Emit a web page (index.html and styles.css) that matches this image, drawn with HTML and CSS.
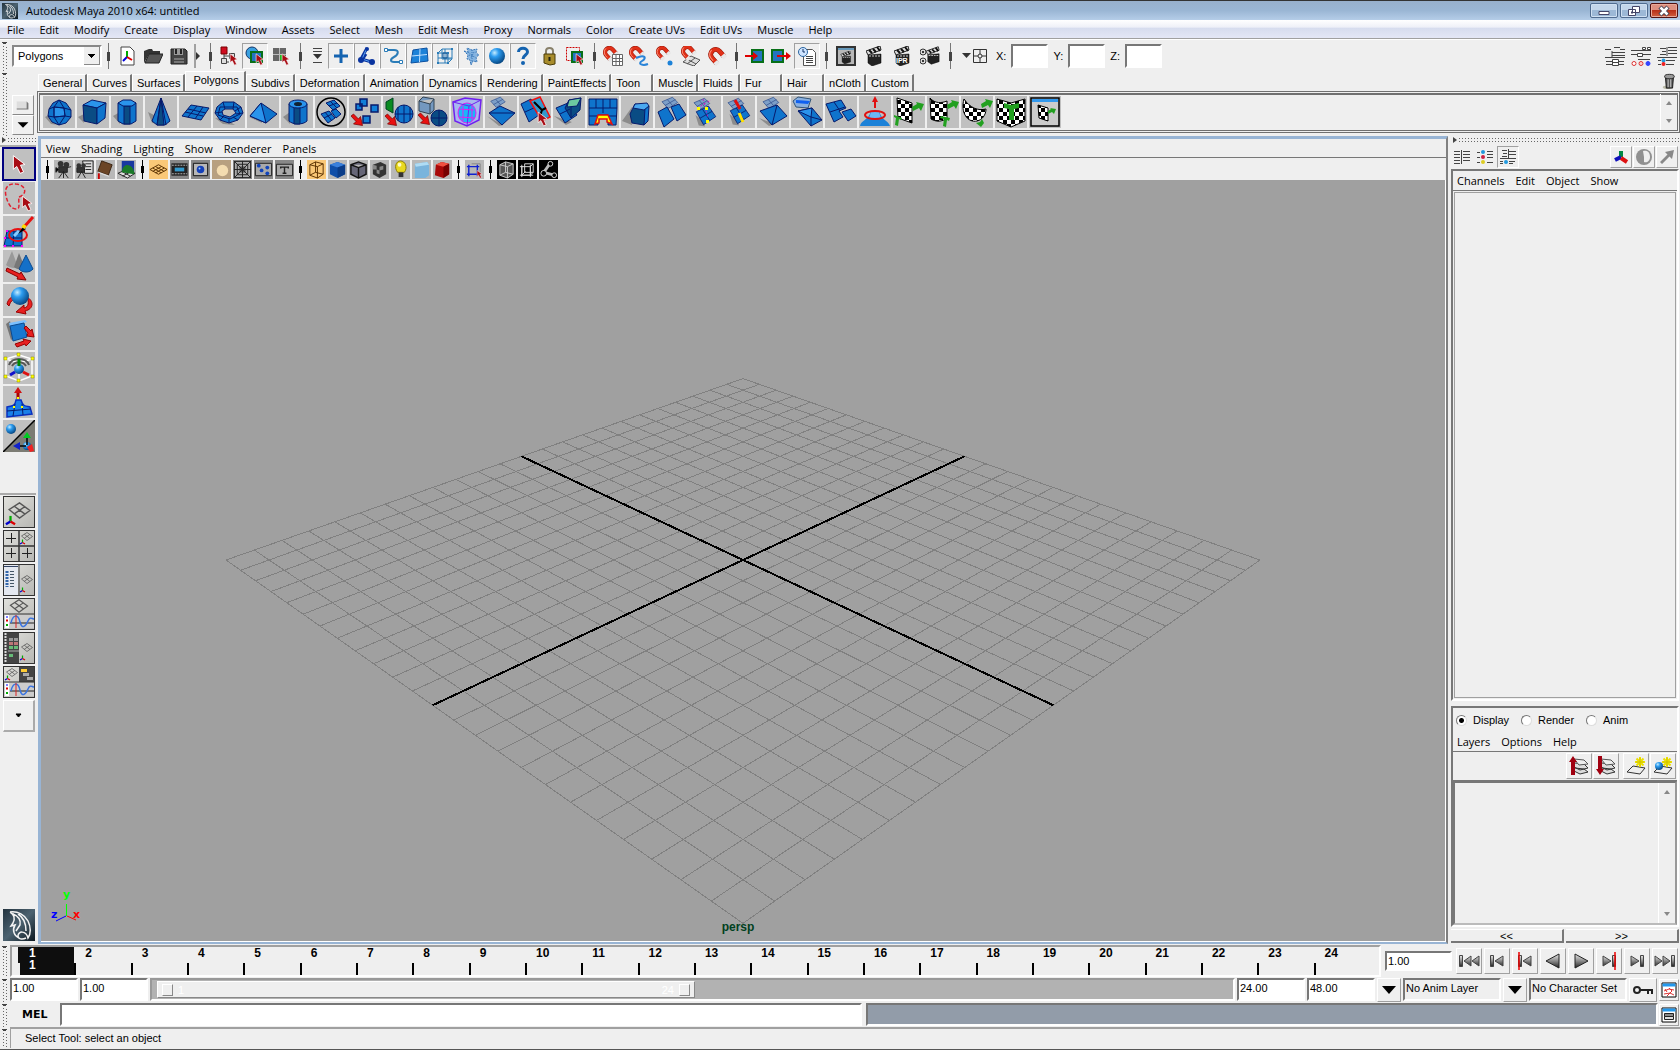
FILE: index.html
```html
<!doctype html>
<html lang="en">
<head>
    <meta charset="utf-8">
    <meta name="viewport" content="width=device-width, initial-scale=1.0">
    <title>Autodesk Maya 2010 x64: untitled</title>
    <link rel="stylesheet" href="styles.css">
</head>
<body>

<!-- Shared icon parts -->
<svg class="sprite" aria-hidden="true">
    <defs>
        <radialGradient id="ball" cx="35%" cy="30%" r="75%">
            <stop offset="0" stop-color="#c4ecff"/><stop offset=".35" stop-color="#2c9cf0"/><stop offset="1" stop-color="#04427c"/>
        </radialGradient>
        <linearGradient id="metal" x1="0" y1="0" x2="0" y2="1">
            <stop offset="0" stop-color="#e8e8e8"/><stop offset=".5" stop-color="#8a8a8a"/><stop offset="1" stop-color="#222"/>
        </linearGradient>
        <linearGradient id="dusk" x1="0" y1="0" x2="1" y2="1">
            <stop offset="0" stop-color="#24343f"/><stop offset=".5" stop-color="#4c6270"/><stop offset="1" stop-color="#0c1820"/>
        </linearGradient>
        <pattern id="chk" width="8" height="8" patternUnits="userSpaceOnUse">
            <rect width="8" height="8" fill="#fff"/><path d="M0 0h4v4h-4zM4 4h4v4h-4z"/>
        </pattern>
    </defs>
    <symbol id="cursor" viewBox="0 0 11 15"><path d="M1 1v10l2.500-2 2.500 5 2.500-1-2.300-5 3.300-.5z" fill="#a80c14" stroke="#fff" stroke-width=".7"/></symbol>
    <symbol id="redarrow" viewBox="0 0 14 14"><path d="M1 3l2.500-2 5 5 2-2.500 2 9-9-1.500 2.500-2.500z" fill="#e81010" stroke="#700" stroke-width=".7"/></symbol>
    <symbol id="magnet" viewBox="0 0 20 20">
        <g transform="rotate(-42 10 10)" fill="none">
            <path d="M5 15V8a5 5 0 0 1 10 0v7" stroke="#8c1408" stroke-width="5"/>
            <path d="M5 15V8a5 5 0 0 1 10 0v7" stroke="#e03018" stroke-width="4"/>
            <path d="M4 11V8a6 6 0 0 1 6-6" stroke="#ff9880"/>
            <path d="M5 13v4M15 13v4" stroke="#e8e8e8" stroke-width="5"/>
        </g>
    </symbol>
    <symbol id="clap" viewBox="0 0 16 20">
        <path d="M2 9l13-1v9l-9 3-4-3z" fill="#222" stroke="#000" stroke-width=".5"/><path d="M0 5l14-5 1 4-13 5z" fill="#ddd" stroke="#222"/><path d="M3 4l3 3M7 3l3 3M11 1l3 4" stroke="#111" stroke-width="2"/><path d="M3 10h12" stroke="#ccc" stroke-dasharray="2 1"/>
    </symbol>
    <symbol id="sheet" viewBox="0 0 32 32"><path class="sh" d="M3 16l4 13 8 1-4-8z"/><path class="b" d="M4 12l15-7 9 13-15 10z"/><path class="ln" d="M11.500 8.500l9 14M8.500 20l15-8.500"/></symbol>
    <symbol id="ghost" viewBox="0 0 32 32"><path d="M4 9l14-6 7 7-13 8z" fill="#7d9fc8" stroke="#33508c"/><path d="M11 6l7 8M8 14l14-8" stroke="#33508c" fill="none"/></symbol>
    <symbol id="mini-axis" viewBox="0 0 12 12"><path d="M6 7V1" stroke="#0a0" stroke-width="2.500"/><path d="M6 7l-5 3" stroke="#00c" stroke-width="2.500"/><path d="M6 7l5 3" stroke="#d00" stroke-width="2.500"/></symbol>
    <symbol id="mini-grid" viewBox="0 0 24 18"><path d="M1 8L12 1l11 8-11 8zM6.500 4.500l11 8M17.500 5L6.500 12.500" fill="none" stroke="#555" stroke-width="1.500"/></symbol>
    <symbol id="graph" viewBox="0 0 32 15"><path d="M1 1h30v13H1z" fill="#ccc"/><path d="M2 1h4v13H2z" fill="#fff"/><path d="M3 3h2" stroke="#00f"/><path d="M3 6.500h2" stroke="#d00" stroke-width="2"/><path d="M3 11h2" stroke="#0a0" stroke-width="2"/><path d="M7 9h24" stroke="#222"/><path d="M8 9c2-9 7-9 9-1s6 4 8-1 4-2 6-2" fill="none" stroke="#3a74e0" stroke-width="1.500"/><path d="M13 1v13" stroke="#d22"/></symbol>
    <symbol id="bars" viewBox="0 0 16 16"><path d="M0 2.500h6M0 5.500h6M0 8.500h6M0 11.500h6M0 14.500h6M9 2.500h7M9 5.500h7M9 8.500h7M9 11.500h7" stroke="#444"/><path d="M7.500 1v14" stroke="#444"/></symbol>
    <symbol id="stack" viewBox="0 0 20 20"><path d="M6 12l9 1 4 3-8 2-6-3M6 7l9 1 4 4-8 2-6-3" fill="#ddd" stroke="#333"/><path d="M5 3l10 1 4 4-9 1z" fill="#eee" stroke="#555"/></symbol>
    <symbol id="page" viewBox="0 0 20 20"><path d="M1 16l6-6 12 2-5 6z" fill="#eee" stroke="#333"/><path d="M14 1v10M9 6h10M10.500 2.500l7 7M17.500 2.500l-7 7" stroke="#ece000" stroke-width="2"/><path d="M14 2v8M10 6h8" stroke="#b5a800" stroke-width=".5"/></symbol>
    <symbol id="wing" viewBox="0 0 32 32">
        <path d="M0 0h32v32H0z" fill="url(#dusk)"/>
        <path d="M7 3c8-1 15 3 18 9 3 6 3 13 0 17-2-8-10-7-10-2 0 3 4 4 8 2M7 3c5 3 5 7 3 11l-2 3 4-1c-3 5-1 11 4 13M10 5c5 2 8 6 7 11l-4 6M15 5c5 3 8 9 8 17" fill="none" stroke="#f4f4f4" stroke-width="1.500"/>
    </symbol>
</svg>

<header class="titlebar">
    <svg class="app-icon"><use href="#wing"/></svg>
    <h1>Autodesk Maya 2010 x64: untitled</h1>
    <div class="win-buttons">
        <button aria-label="Minimize"><svg viewBox="0 0 14 12"><path d="M2 6.500h10v3H2z" fill="#fff" stroke="#446"/></svg></button>
        <button aria-label="Restore"><svg viewBox="0 0 14 12"><path d="M5.500 1.500h7v6h-7zM1.500 4.500h7v6h-7z" fill="#fff" stroke="#446"/><path d="M4 7.500h2" stroke="#446" stroke-width="2"/></svg></button>
        <button class="close" aria-label="Close"><svg viewBox="0 0 14 12"><path d="M3 2l8 8M11 2l-8 8" stroke="#445" stroke-width="4.500"/><path d="M3.500 2.500l7 7M10.500 2.500l-7 7" stroke="#fff" stroke-width="2.500"/></svg></button>
    </div>
</header>

<nav class="menubar">
    <a href="#">File</a><a href="#">Edit</a><a href="#">Modify</a><a href="#">Create</a><a href="#">Display</a><a href="#">Window</a><a href="#">Assets</a><a href="#">Select</a><a href="#">Mesh</a><a href="#">Edit Mesh</a><a href="#">Proxy</a><a href="#">Normals</a><a href="#">Color</a><a href="#">Create UVs</a><a href="#">Edit UVs</a><a href="#">Muscle</a><a href="#">Help</a>
</nav>

<!-- Status line -->
<div class="statusline">
    <i class="grip"></i>
    <select class="menuset" aria-label="Menu set"><option>Polygons</option></select>
    <i class="sep"></i>
    <button aria-label="New scene"><svg viewBox="0 0 20 20"><path d="M4 1h9l4 4v14H4z" fill="#fff" stroke="#444"/><path d="M10 11V5" stroke="#0a0" stroke-width="2"/><path d="M10 11l-4 4" stroke="#00d" stroke-width="2"/><path d="M10 11l5 3" stroke="#d00" stroke-width="2"/></svg></button>
    <button aria-label="Open scene"><svg viewBox="0 0 20 20"><path d="M1 17V5l5-2h3l1 2h7v3H6z" fill="#333"/><path d="M2 17L6 8h14l-4 9z" fill="#555" stroke="#222"/></svg></button>
    <button aria-label="Save scene"><svg viewBox="0 0 20 20"><path d="M2 3h14l2 2v13H2z" fill="#444" stroke="#222"/><path d="M5 3h9v6H5z" fill="#999"/><path d="M7 3v5M12 3v5" stroke="#222" stroke-width="2"/><path d="M5 12h10v5H5z" fill="#777"/><path d="M5 14.500h10" stroke="#444"/></svg></button>
    <svg class="collapse" viewBox="0 0 12 26"><path d="M3 1v24" stroke="#555"/><path d="M4 9l4 4-4 4z" fill="#333"/></svg>
    <i class="sep"></i>
    <button aria-label="Select by hierarchy"><svg viewBox="0 0 20 20"><path d="M5 8v8h5M5 10h5" stroke="#444" fill="none"/><path d="M2 1h6v7H2z" fill="#d00c20" stroke="#700"/><path d="M2.500 12.500h5v5h-5zM10.500 7.500h5v5h-5z" fill="#ddd" stroke="#444"/><use href="#cursor" x="10" y="7" width="10" height="13"/></svg></button>
    <button class="on" aria-label="Select by object"><svg viewBox="0 0 20 20"><circle cx="7" cy="7" r="6" fill="#39a0e0" stroke="#136"/><path d="M6 6h11v10H6z" fill="#2474c0" stroke="#087018" stroke-width="2"/><use href="#cursor" x="10" y="7" width="10" height="13"/></svg></button>
    <button aria-label="Select by component"><svg viewBox="0 0 20 20"><path d="M2 2h13v13H2z" fill="#666"/><path d="M8.500 2v13M2 8.500h13" stroke="#bbb"/><path d="M9 9h5v5H9z" fill="#2b2"/><use href="#cursor" x="10" y="7" width="10" height="13"/></svg></button>
    <i class="sep"></i>
    <svg class="popup" viewBox="0 0 22 26"><path d="M7 5.500h9M7 8.500h9M7 19.500h9" stroke="#444"/><path d="M7 11h9l-4.500 5z" fill="#333"/></svg>
    <button class="on" aria-label="Points"><svg viewBox="0 0 20 20"><path d="M10 3v14M3 10h14" stroke="#1463b0" stroke-width="3"/></svg></button>
    <button class="on" aria-label="Joints"><svg viewBox="0 0 20 20"><path d="M10 2L4 13l11 3M5 14l4-6" fill="none" stroke="#0a34a0" stroke-width="3"/><path d="M9 4l-4 9 9 3" fill="none" stroke="#5aa0f0"/><circle cx="10" cy="3" r="2" fill="#0a34a0"/><circle cx="4" cy="14" r="3" fill="#0a34a0"/><circle cx="15" cy="16" r="3" fill="#0a34a0"/></svg></button>
    <button class="on" aria-label="Curves"><svg viewBox="0 0 20 20"><path d="M3 4h8c6 0 4 5 0 7s-4 5 0 5h5" fill="none" stroke="#2a7cb8" stroke-width="2"/><path d="M1.500 2.500h3v3h-3zM16.500 14.500h3v3h-3z" fill="#fff" stroke="#2a7cb8"/></svg></button>
    <button class="on" aria-label="Surfaces"><svg viewBox="0 0 20 20"><path d="M4 4l14-2 1 13-17 2z" fill="#1c82d8" stroke="#0b50a0"/><path d="M11 3l-.5 13M3 10l15-1.500" stroke="#bfe0ff"/></svg></button>
    <button class="on" aria-label="Deformations"><svg viewBox="0 0 20 20"><path d="M3 7h10v10H3zM7 3h10v10H7zM3 7l4-4M13 17l4-4M10 3v14M3 12h14" fill="none" stroke="#2a7cb8"/><path d="M8 7h4v5H8z" fill="none" stroke="#0a4e90"/><path d="M2 6h2v2H2zM12 6h2v2h-2zM16 2h2v2h-2zM2 16h2v2H2zM12 16h2v2h-2z" fill="#2a7cb8"/></svg></button>
    <button class="on" aria-label="Dynamics"><svg viewBox="0 0 20 20"><path d="M3 5l4 1-1-4 5 2 5-1-1 4 3 2-3 2 1 5-4-1-2 4-1-5-3-1 1-4z" fill="#86b4e0" stroke="#3a78b8" stroke-dasharray="2 1"/><path d="M7 6l5 4M13 6l-3 6M8 9l6 2M11 4v12" stroke="#3a78b8" stroke-dasharray="1 1"/></svg></button>
    <button class="on" aria-label="Rendering"><svg viewBox="0 0 20 20"><circle cx="10" cy="10" r="8" fill="url(#ball)"/></svg></button>
    <button class="on" aria-label="Miscellaneous"><svg viewBox="0 0 20 20"><path d="M5.500 6c0-5 9-5 9 0 0 3-4.500 3-4.500 7" fill="none" stroke="#1463b0" stroke-width="3"/><circle cx="10" cy="17" r="2" fill="#1463b0"/></svg></button>
    <button aria-label="Lock selection"><svg viewBox="0 0 20 20"><path d="M7 10V5c0-4 7-4 7 0v5" fill="none" stroke="#88806a" stroke-width="2"/><path d="M5 8h11v10l-5 1-6-2z" fill="#a88c2c" stroke="#4a3c08"/><path d="M10.500 11v4" stroke="#221" stroke-width="2"/></svg></button>
    <button aria-label="Highlight selection"><svg viewBox="0 0 20 20"><path d="M1.500 1.500h13v13h-13z" fill="none" stroke="#c00" stroke-dasharray="2 1"/><path d="M7 6h10v10H7z" fill="#2474c0" stroke="#087018" stroke-width="2"/><use href="#cursor" x="10" y="7" width="10" height="13"/></svg></button>
    <i class="sep"></i>
    <button aria-label="Snap to grids"><svg viewBox="0 0 20 20"><use href="#magnet" width="17" height="17" x="-1" y="-1"/><path d="M9.500 8.500h10v11h-10zM13 9v10M16.500 9v10M9 12.500h11M9 15.500h11" fill="#fff" stroke="#666"/></svg></button>
    <button aria-label="Snap to curves"><svg viewBox="0 0 20 20"><use href="#magnet" width="17" height="17" x="-1" y="-1"/><path d="M7 12c9-4 11 0 6 3s1 5 6 3" fill="none" stroke="#2a84d8" stroke-width="2"/></svg></button>
    <button aria-label="Snap to points"><svg viewBox="0 0 20 20"><use href="#magnet" width="16" height="16" x="0" y="-1"/><circle cx="15" cy="17" r="2.500" fill="#1c82d8"/></svg></button>
    <button aria-label="Snap to view planes"><svg viewBox="0 0 20 20"><path d="M2 16l8-6 9 4-6 6zM6 13l9 5M6 18l8-6" fill="#ddd" stroke="#555"/><use href="#magnet" width="17" height="17" x="-1" y="-2"/></svg></button>
    <button aria-label="Make live"><svg viewBox="0 0 20 20"><use href="#magnet" width="20" height="20"/></svg></button>
    <i class="sep"></i>
    <button aria-label="Inputs"><svg viewBox="0 0 20 20"><path d="M7 4h11v12H7z" fill="#2474c0" stroke="#087018" stroke-width="2"/><path d="M0 10h9" stroke="#d00" stroke-width="2"/><path d="M8 6l5 4-5 4z" fill="#d00"/></svg></button>
    <button aria-label="Outputs"><svg viewBox="0 0 20 20"><path d="M1 4h11v12H1z" fill="#2474c0" stroke="#087018" stroke-width="2"/><path d="M6 10h10" stroke="#d00" stroke-width="2"/><path d="M15 6l5 4-5 4z" fill="#d00"/></svg></button>
    <button class="on" aria-label="Construction history"><svg viewBox="0 0 20 20"><path d="M6.500 3.500h9l3 3v13h-12z" fill="#fff" stroke="#555"/><path d="M9 10.500h7M9 12.500h7M9 14.500h7M9 16.500h7" stroke="#444"/><circle cx="6" cy="6" r="4.500" fill="#cfe4ff" stroke="#2a64a0"/><path d="M6 3v3h2" fill="none" stroke="#136"/></svg></button>
    <i class="sep"></i>
    <button class="wide" aria-label="Render view"><svg viewBox="0 0 20 20"><path d="M1 1h18v18H1z" fill="#b8b8b8" stroke="#333" stroke-width="2"/><path d="M2 2h16v2H2z" fill="#69b"/><use href="#clap" x="4" y="5" width="12" height="13"/></svg></button>
    <button class="wide" aria-label="Render frame"><svg viewBox="0 0 20 20"><use href="#clap" x="2" width="16" height="20"/></svg></button>
    <button class="wide ipr" aria-label="IPR render"><svg viewBox="0 0 20 20"><use href="#clap" x="2" width="16" height="20"/><text x="4" y="17">IPR</text></svg></button>
    <button class="wide" aria-label="Render settings"><svg viewBox="0 0 20 20"><circle cx="3" cy="6" r="3" fill="#ddd" stroke="#333"/><circle cx="3" cy="15" r="3" fill="#ddd" stroke="#333"/><circle cx="3" cy="6" r="1"/><circle cx="3" cy="15" r="1"/><use href="#clap" x="6" width="14" height="19"/></svg></button>
    <i class="sep"></i>
    <button class="axis" aria-label="Input mode"><svg viewBox="0 0 26 18"><path d="M0 6h9l-4.500 5z" fill="#333"/><path d="M11.500 2.500h13v13h-13zM18 3v12M12 9h12" fill="none" stroke="#333"/><circle cx="18" cy="9" r="2" fill="#eee" stroke="#333"/></svg></button>
    <label>X:<input type="text"></label>
    <label>Y:<input type="text"></label>
    <label>Z:<input type="text"></label>
    <div class="right">
        <button aria-label="Attribute editor"><svg viewBox="0 0 20 20"><path d="M0 3.500h6M9 1.500h6M15 3.500h5M0 11.500h20M7 6.500h13M7 9.500h13M1 15.500h6M1 18.500h6M13 15.500h6M13 18.500h6M7 5v6" stroke="#444"/><path d="M7.500 13.500h6v6h-6zM7 16.500h6" fill="#fff" stroke="#444"/></svg></button>
        <button aria-label="Tool settings"><svg viewBox="0 0 20 20"><path d="M0 4.500h20M0 8.500h6M12 8.500h8M7 13.500h12" stroke="#444"/><path d="M11.500 1.500h3v2h-3zM16.500 1.500h3v2h-3zM6.500 7.500h5v3h-5z" fill="#fff" stroke="#444"/><circle cx="3" cy="17.500" r="2" fill="#fff" stroke="#d33"/><circle cx="10" cy="17.500" r="2" fill="#fcc" stroke="#d33"/><circle cx="17" cy="17.500" r="2" fill="#34f" stroke="#34f"/></svg></button>
        <button aria-label="Channel box"><svg viewBox="0 0 20 20"><path d="M3 2.500h6M5 5.500h4M3 8.500h6M11 1.500h9M11 4.500h9M11 7.500h9M0 11.500h20M1 14.500h3M9 14.500h9M1 18.500h3M9 18.500h8M10 1v9" stroke="#444"/><circle cx="6.500" cy="14.500" r="2" fill="#29d"/><circle cx="6.500" cy="18" r="2" fill="#e22"/></svg></button>
    </div>
</div>

<!-- Shelf -->
<div class="shelf-area">
    <i class="grip"></i>
    <div class="shelf-menu">
        <button aria-label="Shelf tabs"><svg viewBox="0 0 24 20"><path d="M5 6h11v8H5z" fill="#ddd"/><path d="M5 14h11V6l2 2v7H5z" fill="#777"/></svg></button>
        <button aria-label="Shelf options"><svg viewBox="0 0 24 20"><path d="M6 7h12l-6 6z"/></svg></button>
    </div>
    <div class="shelf-main">
        <div class="tabs">
            <a href="#">General</a><a href="#">Curves</a><a href="#">Surfaces</a><a href="#" class="active">Polygons</a><a href="#">Subdivs</a><a href="#">Deformation</a><a href="#">Animation</a><a href="#">Dynamics</a><a href="#">Rendering</a><a href="#">PaintEffects</a><a href="#">Toon</a><a href="#">Muscle</a><a href="#">Fluids</a><a href="#">Fur</a><a href="#">Hair</a><a href="#">nCloth</a><a href="#">Custom</a>
            <button class="trash" aria-label="Delete shelf item"><svg viewBox="0 0 14 18"><ellipse cx="5" cy="16" rx="5" ry="2" fill="#bba"/><path d="M3 5h9l-1 12H4z" fill="#555" stroke="#111"/><path d="M6 6v10M9 6v10" stroke="#ddd"/><ellipse cx="7.500" cy="4" rx="5.500" ry="2.500" fill="#999" stroke="#222"/></svg></button>
        </div>
        <div class="shelf">
            <button aria-label="Sphere"><svg viewBox="0 0 32 32"><path class="sh" d="M2 21l8-4 6 12-8-1z"/><path class="b" d="M16 4l7 3 5 7v7l-5 6-7 2-7-3-4-6 1-7 4-6z"/><path class="l" d="M11 11l10 1 1 8-11 1z"/><path class="ln" d="M16 4l-5 7v10l5 8M16 4l5 8 1 8-6 9M6 13l5-2 10 1 7 2M5 20l6 1 11-1 6 1"/></svg></button>
            <button aria-label="Cube"><svg viewBox="0 0 32 32"><path class="sh" d="M1 21l6-3v9z"/><path class="l" d="M6 9l9-5 14 3-9 5z"/><path class="d" d="M6 9l14 3v16L7 25z"/><path class="b" d="M20 12l9-5-1 15-8 6z"/></svg></button>
            <button aria-label="Cylinder"><svg viewBox="0 0 32 32"><path class="sh" d="M2 20l7-4v12z"/><path class="b" d="M7 7v18l5 3h8l5-3V7z"/><path class="d" d="M13 10v18h6V10z"/><path class="l" d="M7 7l5-3h8l5 3-4 3h-9z"/></svg></button>
            <button aria-label="Cone"><svg viewBox="0 0 32 32"><path class="sh" d="M3 16l8 4 4 8-8-1z"/><path class="b" d="M16 2l9 23-5 4h-8l-5-4z"/><path class="d" d="M16 2l3 27h-7z"/><path class="ln" d="M16 2l-4 27M16 2l5 27"/></svg></button>
            <button aria-label="Plane"><svg viewBox="0 0 32 32"><path class="b" d="M12 9l18 3-8 12-19-4z"/><path class="ln" d="M18 10l-9 11M24 11l-8 12M9 13l18 4M6 16l18 4"/></svg></button>
            <button aria-label="Torus"><svg viewBox="0 0 32 32"><path class="sh" d="M2 22l8 6 12 1-8-5z"/><path class="b" d="M10 6h11l7 5 2 6-5 7-9 3-9-3-5-7 2-6z"/><path class="ln" d="M10 6l2 7M21 6l-1 7M28 11l-6 4M30 17l-7 1M25 24l-5-3M16 27v-5M7 24l4-4M2 17l7-1M7 11h17l3 7-10 5-12-4z"/><path d="M12 13l8 0 3 4-6 4-7-2-1-4z" fill="#b8b8b8" stroke="#071a6b"/></svg></button>
            <button aria-label="Pyramid"><svg viewBox="0 0 32 32"><path class="sh" d="M2 21l9-6 4 12z"/><path class="b" d="M14 7l16 11-11 9L3 20z"/><path class="l" d="M14 7l5 20L3 20z"/></svg></button>
            <button aria-label="Pipe"><svg viewBox="0 0 32 32"><path class="sh" d="M2 21l7-5v12z"/><path class="b" d="M8 8v17c4 4 14 4 18 0V8z"/><path class="d" d="M13 10v18h6V10z"/><ellipse class="l" cx="17" cy="8" rx="9" ry="4"/><ellipse cx="17" cy="8" rx="4" ry="2" fill="#123" /></svg></button>
            <button aria-label="Combine"><svg viewBox="0 0 32 32"><circle cx="16" cy="16" r="14" fill="none" stroke="#000" stroke-width="1.500"/><path class="b" d="M11 7l8-3 6 6-7 4zM6 18l8-3 6 7-7 5zM16 15l5-2 5 5-5 4z"/><path class="ln" d="M15 5l7 7M14 10l8-3M10 16l7 9M9 22l8-4"/></svg></button>
            <button aria-label="Separate"><svg viewBox="0 0 32 32"><path d="M11 3h7v7h-7zM7 8h6v6H7zM22 9h7v7h-7zM14 20h7v7h-7z" fill="#1180d8" stroke="#071a6b" stroke-width="1.500"/><use href="#redarrow" x="1" y="17" width="14" height="14"/></svg></button>
            <button aria-label="Extract"><svg viewBox="0 0 32 32"><path d="M10 2v15L3 13V6z" fill="#0a8a20" stroke="#042"/><circle class="b" cx="21" cy="18" r="9"/><path class="ln" d="M12 18h18M21 9v18M15 11v14M27 11v14"/><use href="#redarrow" x="1" y="17" width="14" height="14"/></svg></button>
            <button aria-label="Boolean"><svg viewBox="0 0 32 32"><path d="M2 5l4-4 11 2v11l-4 4-11-3zM2 5l11 3 4-5M13 8v10" fill="#7498c0" stroke="#345"/><circle class="d" cx="22" cy="22" r="8"/><path class="ln" d="M14 22h16M22 14v16"/><use href="#redarrow" y="16" width="14" height="14"/></svg></button>
            <button aria-label="Subdiv proxy"><svg viewBox="0 0 32 32"><path d="M2 6l12-4 16 2-2 20-12 6L4 25z" fill="#a8b8f0" stroke="#7020f0" stroke-width="1.500"/><ellipse cx="16" cy="17" rx="9" ry="10" fill="#18b8f8" stroke="#e020f0"/><path d="M2 6l16 4 12-6M18 10l-2 20" fill="none" stroke="#7020f0"/><path d="M8 13l15 1M8 21l16 1M12 9v16M21 9v16" fill="none" stroke="#e020f0"/></svg></button>
            <button aria-label="Triangulate"><svg viewBox="0 0 32 32"><use href="#ghost" width="28" height="22" y="-1"/><path class="sh" d="M2 20l12 10 4-1z"/><path class="b" d="M4 17l11-7 15 7-13 12z"/><path class="ln" d="M4 17l26 0"/></svg></button>
            <button aria-label="Split polygon"><svg viewBox="0 0 32 32"><path class="b" d="M2 8l10-5 8 16-10 7z"/><path class="ln" d="M6 16l11-5"/><path d="M11 5l10-4 10 20-8 4z" fill="#39c" stroke="#f01010" stroke-width="1.500"/><path d="M15 6l8 8-2 6M23 14l4-2" fill="none" stroke="#000" stroke-width="2"/><use href="#cursor" x="18" y="15" width="12" height="16"/></svg></button>
            <button aria-label="Extrude"><svg viewBox="0 0 32 32"><path class="sh" d="M1 20l12 9 6-3z"/><path class="b" d="M3 12l12-5 9 12-12 8z"/><path class="d" d="M12 12l4-8 12-2-1 12-9 8z"/><path d="M16 4l12-2-4 8-10 1z" fill="#6cc8a0" stroke="#071a6b"/><path class="ln" d="M7 18l10-5M18 11v11"/></svg></button>
            <button aria-label="Bridge"><svg viewBox="0 0 32 32"><path class="b" d="M2 3h28v9l-1 17h-8V19H11v10H2z"/><path class="ln" d="M2 12h28M9 3v9M16 3v14M23 3v9M2 20h9M21 20h9"/><path d="M8 28l3-9h10l4 9-5-2v-3h-8v4z" fill="#ff0" stroke="#e01010" stroke-width="1.500"/></svg></button>
            <button aria-label="Bevel"><svg viewBox="0 0 32 32"><path class="sh" d="M1 25L11 11v18z"/><path class="d" d="M9 18l5-10 12 2-3 19-12-2z"/><path class="b" d="M24 12l4-2-1 15-4 4z"/><path d="M14 8l12-1 2 3-5 4-11-2z" fill="#4aa8f0" stroke="#071a6b"/></svg></button>
            <button aria-label="Merge"><svg viewBox="0 0 32 32"><use href="#ghost" width="32" height="24" y="-1"/><path class="b" d="M3 16l9-5 7 12-10 8zM16 11l8-3 7 11-9 6z"/></svg></button>
            <button aria-label="Merge edges"><svg viewBox="0 0 32 32"><use href="#ghost" width="28" height="24"/><use href="#sheet" x="2" y="6" width="30" height="26"/><path d="M14 3l5 19M8 12l14-8" stroke="#c020c0" stroke-dasharray="2 2"/><path d="M8 11h3v3H8zM16 11h3v3h-3zM17 24h3v3h-3z" fill="#ff0"/></svg></button>
            <button aria-label="Collapse"><svg viewBox="0 0 32 32"><use href="#ghost" width="28" height="24"/><use href="#sheet" x="2" y="5" width="30" height="26"/><path d="M12 4l5 9" stroke="#e01010" stroke-width="3"/><path d="M16 17l4 9" stroke="#ffe000" stroke-width="3"/></svg></button>
            <button aria-label="Append"><svg viewBox="0 0 32 32"><use href="#ghost" width="30" height="24" y="-1"/><path class="sh" d="M2 22l10 8 6-2z"/><path class="b" d="M3 15l17-6 10 11-15 9z"/><path class="ln" d="M20 9l-5 20"/></svg></button>
            <button aria-label="Fill hole"><svg viewBox="0 0 32 32"><path d="M2 5l5-4 13 2-3 9-12-1z" fill="#8ab0e0" stroke="#357"/><path d="M5 4l14 1-2 3-12-1z" fill="#1060f0"/><path class="b" d="M7 15l14-3 10 12-11 6z"/><path class="l" d="M7 15l14-3-1 9z"/><path class="ln" d="M20 21l11 3M20 21v9"/></svg></button>
            <button aria-label="Duplicate face"><svg viewBox="0 0 32 32"><path class="b" d="M1 8l15-4 5 8-7 3 4 6-9 5zM17 16l9-3 5 7-8 5z"/><path class="ln" d="M9 6l6 9M5 16l15-5"/></svg></button>
            <button aria-label="Soften edge"><svg viewBox="0 0 32 32"><path d="M1 30c1-6 8-5 11-15h8c3 10 9 9 11 15z" fill="#1c82d8"/><path d="M12 16c2-3 6-3 8 0l2 6H10z" fill="#6bb8f4"/><ellipse cx="16" cy="19" rx="10" ry="4" fill="none" stroke="#e01010" stroke-width="2"/><path d="M16 12V4" stroke="#e01010" stroke-width="2"/><path d="M13 6l3-6 3 6z" fill="#e01010"/></svg></button>
            <button aria-label="Planar mapping"><svg viewBox="0 0 32 32"><path d="M4 2l15 5v20L5 22z" fill="url(#chk)" stroke="#000"/><path class="g" d="M19 11l5-3-1-2 8 2-3 7-2-3-6 3zM1 19l8 3-1 2-2-1-1 7-3-1 1-7-2-1z"/></svg></button>
            <button aria-label="Cylindrical mapping"><svg viewBox="0 0 32 32"><path d="M3 2c5 6 12 5 17 3v17c-5 4-11 4-16 1z" fill="url(#chk)" stroke="#000"/><path class="g" d="M20 9l5-3-1-2 8 2-3 7-2-3-6 3zM14 20l9 2-1 3-2-1-1 7-3-1 1-7-4-1z"/></svg></button>
            <button aria-label="Spherical mapping"><svg viewBox="0 0 32 32"><path d="M3 3c-4 14 4 24 13 22 5-1 9-6 9-12-8 2-16-1-22-10z" fill="url(#chk)" stroke="#000"/><path class="g" d="M20 8l5-3-1-2 8 2-3 7-2-3-6 3zM15 27l4-1 2-3 2 4-3 4z"/></svg></button>
            <button aria-label="Automatic mapping"><svg viewBox="0 0 32 32"><path d="M2 3l14 4 14-4v22l-14 6L2 25z" fill="url(#chk)" stroke="#000"/><path class="g" d="M9 7l7 2 8-2v5l-5 1v11h-5V13l-5-1z"/></svg></button>
            <button aria-label="UV texture editor"><svg viewBox="0 0 32 32"><path d="M2 2h28v28H2z" fill="#ccc" stroke="#000" stroke-width="1.500"/><path d="M3 3h26v3H3z" fill="#39e"/><path d="M9 9l10 3v13L10 22z" fill="url(#chk)" stroke="#000"/><path class="g" d="M19 15l3-2-1-1 6 1-2 5-2-2-4 2z"/></svg></button>
            <div class="updown"><i class="up"></i><i class="down"></i></div>
        </div>
    </div>
</div>

<main class="workspace">
    <aside class="toolbox">
        <i class="hgrip"></i>
        <div class="tools">
            <button class="active" aria-label="Select tool"><svg viewBox="0 0 32 32"><use href="#cursor" x="9" y="6" width="15" height="21"/></svg></button>
            <button aria-label="Lasso tool"><svg viewBox="0 0 32 32"><path d="M16 15c9-3 7-12-3-13C5 1 1 6 3 14s5 13 10 13 2-5 3-12z" fill="none" stroke="#e02030" stroke-width="1.500" stroke-dasharray="4 2"/><use href="#cursor" x="18" y="13" width="13" height="17"/></svg></button>
            <button aria-label="Paint selection tool"><svg viewBox="0 0 32 32"><path class="b" d="M4 15h15v15H1z"/><path class="ln" d="M11 15l-1 15M2 22h17"/><path d="M1 29h2v2H1zM9 29h2v2H9zM18 29h2v2h-2zM3 14h2v2H3zM1 21h2v2H1z" fill="#f0f"/><ellipse cx="15" cy="19" rx="9" ry="6" fill="none" stroke="#e81010" stroke-width="2"/><path d="M11 20l5-5" stroke="#8cf" stroke-width="3"/><path d="M15 18l5-7 3 2z"/><path d="M21 11L30 1" stroke="#e81010" stroke-width="3"/><path d="M20 12l2-3" stroke="#fd0" stroke-width="4"/></svg></button>
            <button aria-label="Move tool"><svg viewBox="0 0 32 32"><path d="M9 1l6 16c-3 2-9 1-12-2z" fill="#999"/><path d="M16 3l6 15c-3 2-8 2-11-1z" fill="#777"/><path d="M23 5l7 14c-3 4-11 4-14 0z" fill="#1470c8" stroke="#0a4a90"/><path d="M4 18l13 6 1-2 5 8-9-1 1-2-12-6z" fill="#e82020" stroke="#800"/></svg></button>
            <button aria-label="Rotate tool"><svg viewBox="0 0 32 32"><path d="M4 20c1-5 5-8 8-8l-2 4c-2 1-3 3-4 6zM24 13c7 4 7 12-2 14l1 3-10-2 8-7v3c5-1 5-6 3-11z" fill="#e82020" stroke="#900"/><circle cx="17" cy="12" r="9" fill="url(#ball)"/></svg></button>
            <button aria-label="Scale tool"><svg viewBox="0 0 32 32"><path d="M3 6l4-3 4 17-3 2z" fill="#777"/><path d="M6 5l16-3 2 2-17 5z" fill="#7ac0ff"/><path d="M7 8l14-3 3 14-14 4z" fill="#1978d0" stroke="#0a4a90"/><path d="M23 8l5 5 1-2 2 8-7-1 1-3-4-5zM12 26l9-3-1-2 8 2-5 5-1-2-8 3z" fill="#e82020" stroke="#900"/></svg></button>
            <button aria-label="Universal manipulator"><svg viewBox="0 0 32 32"><path d="M3 7l13-4 13 4v17l-13 5L3 24zM3 7l13 4 13-4M16 11v18" fill="none" stroke="#fff" stroke-width="1.500"/><path d="M6 13c3-8 17-8 20 0M9 14c3-5 11-5 14 0" fill="none" stroke="#555" stroke-width="2"/><circle cx="16" cy="17" r="5" fill="url(#ball)"/><path d="M16 14V7" stroke="#080" stroke-width="3"/><path d="M12 20l-5 3" stroke="#11c" stroke-width="3"/><path d="M20 20l6 3" stroke="#d11" stroke-width="3"/><path d="M1 5h3v3H1zM14 1h3v3h-3zM28 5h3v3h-3zM1 23h3v3H1zM28 23h3v3h-3zM14 27h3v3h-3z" fill="#ff0" stroke="#880" stroke-width=".5"/></svg></button>
            <button aria-label="Soft modification tool"><svg viewBox="0 0 32 32"><path d="M4 21c6-1 8-1 9-7h5c2 7 5 6 9 7l2 7-25 3z" fill="#1a80e8" stroke="#0a30c0" stroke-width="1.500"/><path class="ln" d="M12 18l-2 12M19 18l1 11M4 25l24-2"/><path d="M15 13V6" stroke="#a00" stroke-width="3"/><path d="M11 7l4-6 4 6z" fill="#d01010"/><path d="M14 11h2v2h-2zM10 20h2v2h-2zM18 20h2v2h-2z" fill="#ff0"/></svg></button>
            <button aria-label="Show manipulator"><svg viewBox="0 0 32 32"><path d="M32 0v32H0z" fill="#7c7c74"/><path d="M0 32L32 0" stroke="#000" stroke-width="1.500"/><circle cx="8" cy="9" r="5" fill="url(#ball)"/><circle cx="24" cy="26" r="4" fill="url(#ball)"/><path d="M24 25v-8M23 26h-8" stroke="#000" stroke-width="1.500"/><path d="M20 18l4-6 4 6z" fill="#0c2"/><path d="M17 22l-7 4 7 4z" fill="#12c"/><path d="M24 27l5-3 2 7-4 1z" fill="#e22"/></svg></button>
            <span class="slot"></span>
        </div>
        <div class="layouts">
            <button aria-label="Single perspective view"><svg viewBox="0 0 32 32"><use href="#mini-grid" x="5" y="6" width="23" height="17"/><use href="#mini-axis" x="2" y="19" width="11" height="11"/></svg></button>
            <button aria-label="Four view"><svg viewBox="0 0 32 32"><path d="M16 1v30M1 16h30" stroke="#333" stroke-width="1.500"/><path d="M3 8.500h10M8.500 3v10M3 23.500h10M8.500 18v10M19 23.500h10M24.500 18v10" stroke="#222"/><use href="#mini-grid" x="18" y="2" width="12" height="9"/><use href="#mini-axis" x="16" y="9" width="7" height="6"/></svg></button>
            <button aria-label="Outliner and persp"><svg viewBox="0 0 32 32"><path d="M1 1h14v30H1z" fill="#e4e8f0"/><path d="M1 2.500h14" stroke="#346"/><path d="M4 7v16" stroke="#36a" stroke-dasharray="2 1" stroke-width="3"/><path d="M9 7v16" stroke="#456" stroke-dasharray="1 2" stroke-width="4"/><path d="M16 1v30" stroke="#333"/><use href="#mini-grid" x="18" y="11" width="12" height="9"/><use href="#mini-axis" x="16" y="23" width="7" height="6"/></svg></button>
            <button aria-label="Persp and graph"><svg viewBox="0 0 32 32"><use href="#mini-grid" x="4" y="1" width="24" height="14"/><path d="M0 16h32" stroke="#333"/><use href="#graph" y="16" width="32" height="15"/></svg></button>
            <button aria-label="Hypershade and persp"><svg viewBox="0 0 32 32"><path d="M1 1h15v30H1z" fill="#444"/><path d="M2.500 1v30" stroke="#ddd" stroke-width="2" stroke-dasharray="2 1"/><path d="M6 6h4v3H6zM11 6h4v3h-4z" fill="#999"/><path d="M6 10h4v3H6zM11 10h4v3h-4z" fill="#b77"/><path d="M6 14h4v3H6zM11 14h4v3h-4zM6 22h4v3H6z" fill="#6b7"/><path d="M5 19h11" stroke="#aaa"/><use href="#mini-grid" x="18" y="11" width="12" height="9"/><use href="#mini-axis" x="16" y="23" width="7" height="6"/></svg></button>
            <button aria-label="Persp, hypergraph and graph"><svg viewBox="0 0 32 32"><path d="M16 1h15v15H16z" fill="#444"/><path d="M18 3h6v3h-6z" fill="#fc3"/><path d="M20 7h6v3h-6zM24 11h6v3h-6z" fill="#aaa"/><use href="#mini-grid" x="3" y="2" width="12" height="9"/><use href="#mini-axis" x="1" y="9" width="7" height="6"/><path d="M0 16h32" stroke="#333"/><use href="#graph" y="16" width="32" height="15"/></svg></button>
            <button class="more" aria-label="More layouts"><svg viewBox="0 0 32 32"><path d="M13 14h5l-2.500 3z" stroke="#000"/></svg></button>
        </div>
        <svg class="logo"><use href="#wing"/></svg>
    </aside>

    <section class="panel">
        <nav class="panel-menu"><a href="#">View</a><a href="#">Shading</a><a href="#">Lighting</a><a href="#">Show</a><a href="#">Renderer</a><a href="#">Panels</a></nav>
        <div class="panel-bar">
            <i class="psep"></i>
            <button aria-label="Select camera"><svg viewBox="0 0 20 20"><path d="M5 7h9v6H5zM10 12l-5 7M10 12l5 7M10 12v7" fill="#333" stroke="#222"/><circle cx="7" cy="4" r="3" fill="#333"/><circle cx="13" cy="5" r="3" fill="#333"/><path d="M2 8l3 2-3 3zM14 8l4-1" stroke="#222"/></svg></button>
            <button aria-label="Camera attributes"><svg viewBox="0 0 20 20"><path d="M8 1h11v13h-9z" fill="#ddd" stroke="#222"/><path d="M11 4h6M11 7h6M11 10h6" stroke="#222"/><path d="M2 8h8v5H2zM7 12l-4 7M7 12l4 7" fill="#333" stroke="#222"/><circle cx="4" cy="6" r="2.500" fill="#333"/><circle cx="9" cy="6" r="2.500" fill="#333"/></svg></button>
            <button aria-label="Bookmarks"><svg viewBox="0 0 20 20"><path d="M6 1l11 4-4 11-11-4z" fill="#6b4526" stroke="#3a2412"/><path d="M2 12l11 4 1 2-11-4z" fill="#ddd"/><path d="M3 14v6" stroke="#c00" stroke-width="2"/></svg></button>
            <button aria-label="Image plane"><svg viewBox="0 0 20 20"><path d="M5 1h13v11H5z" fill="#1838a0"/><path d="M1 14l9-4 9 4-8 5zM5 12l9 5M15 12l-9 5" fill="#ddd" stroke="#222"/><path d="M5 13c1-10 10-10 13-1v3z" fill="#1b7a28"/></svg></button>
            <i class="psep"></i>
            <button class="lit" aria-label="Grid"><svg viewBox="0 0 20 20"><path d="M1 10l9-5 9 5-9 5zM4 8.500l9 5M7 7l9 5M16 8.500l-9 5M13 7l-9 5" fill="none" stroke="#5a3000"/></svg></button>
            <button class="dk" aria-label="Film gate"><svg viewBox="0 0 20 20"><path d="M1.500 3.500h17v13h-17z" fill="#222"/><path d="M2 5.500h16M2 14.500h16" stroke="#bbb" stroke-dasharray="2 1"/><path d="M5 8h10v4H5z" fill="#39c"/></svg></button>
            <button class="dk" aria-label="Resolution gate"><svg viewBox="0 0 20 20"><path d="M2.500 3.500h15v13h-15z" fill="#b8b8b8" stroke="#111"/><circle cx="10" cy="10" r="4" fill="#1440b8"/><circle cx="9" cy="9" r="1" fill="#9cf"/></svg></button>
            <button class="tan" aria-label="Gate mask"><svg viewBox="0 0 20 20"><circle cx="11" cy="11" r="6" fill="#f4dcb0"/></svg></button>
            <button class="dk" aria-label="Field chart"><svg viewBox="0 0 20 20"><path d="M1 1h18v18H1z" fill="#aaa"/><path d="M1.500 1.500h17v17h-17zM4.500 4.500h11v11h-11zM7.500 7.500h5v5h-5zM1 1l18 18M19 1L1 19M10 1v18M1 10h18" fill="none" stroke="#222"/></svg></button>
            <button class="dk" aria-label="Safe action"><svg viewBox="0 0 20 20"><path d="M1.500 3.500h17v13h-17z" fill="#aaa" stroke="#222"/><circle cx="5" cy="6" r="2" fill="#14b"/><circle cx="8" cy="11" r="2" fill="#14b"/><circle cx="14" cy="8" r="2" fill="#14b"/><circle cx="14" cy="14" r="2" fill="#14b"/></svg></button>
            <button class="dk" aria-label="Safe title"><svg viewBox="0 0 20 20"><path d="M1.500 4.500h17v12h-17z" fill="#aaa" stroke="#222"/><path d="M6 9V7.500h8V9M10 7.500V14M8 14h4" fill="none" stroke="#222" stroke-width="1.500"/></svg></button>
            <i class="psep"></i>
            <button class="lit" aria-label="Wireframe"><svg viewBox="0 0 20 20"><path d="M3 5l6-3 8 2v11l-6 4-8-3zM3 5l8 2 6-3M11 7v12M9 2v11l-6 3M9 13l8 2" fill="none" stroke="#5a3000"/></svg></button>
            <button aria-label="Smooth shade"><svg viewBox="0 0 20 20"><path d="M2 5l8-3 8 3v10l-8 4-8-4z" fill="#0f4ea8"/><path d="M2 5l8-3 8 3-8 3z" fill="#3a80dc"/><path d="M10 8l8-3v10l-8 4z" fill="#0a3c88"/></svg></button>
            <button aria-label="Wireframe on shaded"><svg viewBox="0 0 20 20"><path d="M2 5l8-3 8 3v10l-8 4-8-4zM2 5l8 3 8-3M10 8v11" fill="#667" stroke="#111" stroke-width="1.500"/></svg></button>
            <button aria-label="Textured"><svg viewBox="0 0 20 20"><path d="M3 5l8-3 6 3v10l-7 4-7-4z" fill="#333"/><path d="M3 5l4 1v4H3zM7 10l3 1v4l-3-1zM10 7l4-1v4l-4 1z" fill="#888"/></svg></button>
            <button aria-label="Use all lights"><svg viewBox="0 0 20 20"><path d="M7 13C3 8 5 1 10 1s8 7 4 12z" fill="#e8d820" stroke="#887800"/><path d="M8 13h5v5H8z" fill="#333"/><circle cx="9" cy="5" r="2" fill="#fffbc0"/></svg></button>
            <button aria-label="X-ray"><svg viewBox="0 0 20 20"><path d="M3 4l13-2 2 3v11l-4 3H3z" fill="#7ab4dc"/><path d="M3 4l13-2 2 3-14 2z" fill="#b0dcf4"/></svg></button>
            <button aria-label="High quality"><svg viewBox="0 0 20 20"><path d="M3 5l6-3 8 2v11l-6 4-9-3z" fill="#a80808"/><path d="M3 5l6-3 8 2-6 3z" fill="#f05040"/><path d="M11 7l6-3v11l-6 4z" fill="#700"/></svg></button>
            <i class="psep"></i>
            <button aria-label="Isolate select"><svg viewBox="0 0 20 20"><path d="M7 4h9v9" fill="none" stroke="#888"/><path d="M4 7h9v8H4zM2 7h13M2 15h13M4 5v12M13 5v12" fill="none" stroke="#1020d0" stroke-width="1.500"/><use href="#cursor" x="12" y="10" width="7" height="10"/></svg></button>
            <i class="psep"></i>
            <button class="blk" aria-label="X-ray shading"><svg viewBox="0 0 20 20"><path d="M3 5l6-3 8 2v11l-6 4-8-3z" fill="#555"/><path d="M3 5l6-3 8 2v11l-6 4-8-3zM3 5l8 2 6-3M11 7v12M9 2v11l-6 3M9 13l8 2" fill="none" stroke="#ccc"/></svg></button>
            <button class="blk" aria-label="X-ray active"><svg viewBox="0 0 20 20"><path d="M4 7h9v9H4zM7 4h9v9H7zM2 7h3M4 5v13M4 16L8 12M13 7l3-3M13 16l3-3M2 16h14M13 5v13" fill="none" stroke="#ddd"/></svg></button>
            <button class="blk" aria-label="X-ray joints"><svg viewBox="0 0 20 20"><path d="M12 3L5 13l11 3" fill="none" stroke="#bbb" stroke-width="3"/><circle cx="12" cy="4" r="2.500" stroke="#ddd"/><circle cx="5" cy="14" r="3" stroke="#ddd"/><circle cx="16" cy="16" r="2.500" stroke="#ddd"/></svg></button>
        </div>
        <div class="viewport">
            <svg id="grid" viewBox="0 0 1404 760" role="img" aria-label="Perspective grid">
                <g class="grid-lines"></g>
                <g class="grid-axes"></g>
                <text class="cam" x="697" y="750" text-anchor="middle">persp</text>
            </svg>
            <svg class="gizmo" viewBox="0 0 34 40" aria-hidden="true"><path d="M16.500 32V20" stroke="#0f0"/><path d="M16 32l-10 5" stroke="#00f"/><path d="M17 32l9 4" stroke="#f00"/><text x="13" y="14" fill="#0f0">y</text><text x="1" y="34" fill="#00f">z</text><text x="23" y="34" fill="#f00">x</text></svg>
        </div>
    </section>

    <aside class="channel">
        <i class="hgrip"></i>
        <div class="channel-bar">
            <button aria-label="Channel box only"><svg viewBox="0 0 16 16"><use href="#bars"/></svg></button>
            <button aria-label="Layer editor only"><svg viewBox="0 0 16 16"><path d="M0 3.500h3M0 8.500h3M0 13.500h3M10 2.500h6M10 5.500h6M10 8.500h6M10 13.500h6" stroke="#444"/><circle cx="6" cy="3" r="2" fill="#29d"/><circle cx="6" cy="8" r="2" fill="#c24"/><circle cx="6" cy="13" r="2" fill="#dc2"/></svg></button>
            <button class="on" aria-label="Channel box and layers"><svg viewBox="0 0 16 16"><path d="M2 1.500h5M3 4.500h4M2 7.500h5M9 2.500h7M9 5.500h7M0 9.500h16M0 12.500h3M0 14.500h3M9 12.500h6M9 14.500h4M8.500 0v9" stroke="#444"/><circle cx="6" cy="13" r="2" fill="#29d"/></svg></button>
            <button class="raised first" aria-label="Manipulators"><svg viewBox="0 0 16 16"><path d="M8 8V2" stroke="#084" stroke-width="4"/><path d="M8 8l-6 3" stroke="#11b" stroke-width="4"/><path d="M8 9l6 4" stroke="#d11" stroke-width="4"/></svg></button>
            <button class="raised" aria-label="Slow"><svg viewBox="0 0 16 16"><circle cx="8" cy="8" r="8" fill="#909090"/><path d="M8 8L7 2c5-1 7 2 7 6s-3 6-6 5z" fill="#efefef"/></svg></button>
            <button class="raised" aria-label="Linear"><svg viewBox="0 0 16 16"><path d="M15 1l-2 9-2.500-2.500L3 15l-2-2 7.500-7.500L6 3z" fill="#888"/></svg></button>
        </div>
        <div class="box channels">
            <nav><a href="#">Channels</a><a href="#">Edit</a><a href="#">Object</a><a href="#">Show</a></nav>
            <div class="well"></div>
        </div>
        <div class="box layers">
            <div class="radios">
                <label><input type="radio" name="layer" checked>Display</label>
                <label><input type="radio" name="layer">Render</label>
                <label><input type="radio" name="layer">Anim</label>
            </div>
            <nav><a href="#">Layers</a><a href="#">Options</a><a href="#">Help</a></nav>
            <div class="layer-bar">
                <button aria-label="Move layer up"><svg viewBox="0 0 20 20"><use href="#stack"/><path d="M0 6l4-6 4 6H6v13H2V6z" fill="#a00010"/></svg></button>
                <button aria-label="Move layer down"><svg viewBox="0 0 20 20"><use href="#stack"/><path d="M0 13l4 6 4-6H6V0H2v13z" fill="#a00010"/></svg></button>
                <button class="gap" aria-label="New empty layer"><svg viewBox="0 0 20 20"><use href="#page"/></svg></button>
                <button aria-label="New layer from selected"><svg viewBox="0 0 20 20"><use href="#page"/><circle cx="6" cy="10" r="4" fill="url(#ball)"/></svg></button>
            </div>
            <div class="list"><div class="updown"><i class="up"></i><i class="down"></i></div></div>
        </div>
        <div class="pager"><button>&lt;&lt;</button><button>&gt;&gt;</button></div>
    </aside>
</main>

<!-- Time slider -->
<div class="row time-row">
    <i class="grip"></i>
    <div class="timeline" id="timeline"></div>
    <input class="current" type="text" value="1.00" aria-label="Current time">
    <div class="playback">
        <button aria-label="Go to start"><svg viewBox="0 0 22 20"><path d="M1.500 4.500h3v11h-3zM13 5v10l-7-5zM21 5v10l-7-5z" fill="url(#metal)" stroke="#444"/></svg></button>
        <button aria-label="Step back one frame"><svg viewBox="0 0 22 20"><path d="M4.500 4.500h3v11h-3zM17 5v10l-8-5z" fill="url(#metal)" stroke="#444"/></svg></button>
        <button aria-label="Step back one key"><svg viewBox="0 0 22 20"><path d="M4.500 4.500h3v11h-3zM17 5v10l-8-5z" fill="url(#metal)" stroke="#444"/><path d="M5 1v18" stroke="#e00" stroke-width="1.500"/></svg></button>
        <button aria-label="Play backwards"><svg viewBox="0 0 22 20"><path d="M17 3v14L4 10z" fill="url(#metal)" stroke="#222"/></svg></button>
        <button aria-label="Play forwards"><svg viewBox="0 0 22 20"><path d="M5 3v14l13-7z" fill="url(#metal)" stroke="#222"/></svg></button>
        <button aria-label="Step forward one key"><svg viewBox="0 0 22 20"><path d="M14.500 4.500h3v11h-3zM5 5v10l8-5z" fill="url(#metal)" stroke="#444"/><path d="M17 1v18" stroke="#e00" stroke-width="1.500"/></svg></button>
        <button aria-label="Step forward one frame"><svg viewBox="0 0 22 20"><path d="M14.500 4.500h3v11h-3zM5 5v10l8-5z" fill="url(#metal)" stroke="#444"/></svg></button>
        <button aria-label="Go to end"><svg viewBox="0 0 22 20"><path d="M17.500 4.500h3v11h-3zM9 5v10l7-5zM1 5v10l7-5z" fill="url(#metal)" stroke="#444"/></svg></button>
    </div>
</div>

<!-- Range slider -->
<div class="row range-row">
    <i class="grip"></i>
    <input type="text" value="1.00" aria-label="Animation start">
    <input type="text" value="1.00" aria-label="Playback start">
    <div class="track"><div class="range"><i></i><span>1</span><span class="end">24</span><i></i></div></div>
    <input type="text" value="24.00" aria-label="Playback end">
    <input type="text" value="48.00" aria-label="Animation end">
    <button class="drop" aria-label="Choose animation layer"><svg viewBox="0 0 16 10"><path d="M1 1h14l-7 8z"/></svg></button>
    <input class="named" type="text" readonly value="No Anim Layer" aria-label="Animation layer">
    <button class="drop" aria-label="Choose character set"><svg viewBox="0 0 16 10"><path d="M1 1h14l-7 8z"/></svg></button>
    <input class="named" type="text" readonly value="No Character Set" aria-label="Character set">
    <button class="key" aria-label="Auto key"><svg viewBox="0 0 22 10"><circle cx="5" cy="5" r="3" fill="none" stroke="#222" stroke-width="2"/><path d="M8 5h13M16 5v4M20 5v4" stroke="#222" stroke-width="2"/></svg></button>
    <button class="pref" aria-label="Animation preferences"><svg viewBox="0 0 16 16"><path d="M1 1h14v14H1z" fill="#fff" stroke="#000"/><path d="M1.500 1.500h13v3h-13z" fill="#29e"/><path d="M3 9l5-2 5 1M3 12l6-1 4 2M8 6l3 3-5 5M4 7l2 3" fill="none" stroke="#d33"/></svg></button>
</div>

<!-- Command line -->
<div class="row cmd-row">
    <i class="grip"></i>
    <label for="mel">MEL</label>
    <input id="mel" type="text">
    <output aria-label="Command result"></output>
    <button class="pref" aria-label="Script editor"><svg viewBox="0 0 16 16"><path d="M1 1h14v14H1z" fill="#fff" stroke="#000"/><path d="M1.500 1.500h13v3h-13z" fill="#29e"/><path d="M3.500 6.500h9v3h-9z" fill="#888" stroke="#222"/><path d="M3.500 9.500h9v3h-9z" fill="#ddd" stroke="#222"/></svg></button>
</div>

<footer class="row help-row"><i class="grip"></i><p>Select Tool: select an object</p></footer>

<script src="app.js"></script>
</body>
</html>
```
FILE: styles.css
```css
* {
    box-sizing: border-box;
}
body {
    margin: 0;
    height: 100vh;
    display: flex;
    flex-direction: column;
    overflow: hidden;
    background: #efefef;
    border-top: 1px solid #333;
    color: #000;
    font: 11px/16px "Liberation Sans", Arial, sans-serif;
}
a {
    color: inherit;
    text-decoration: none;
}
button {
    display: flex;
    align-items: center;
    justify-content: center;
    flex: none;
    padding: 0;
    border: 0;
    background: none;
    color: inherit;
    font: inherit;
}
input, select {
    font: inherit;
    color: inherit;
}
svg {
    display: block;
    flex: none;
}
.sprite {
    position: absolute;
    width: 0;
    height: 0;
}

/* icon paints */
.b { fill: #0f74cc; stroke: #071a6b; }
.l { fill: #2a94ec; stroke: #071a6b; }
.d { fill: #0a4c84; stroke: #071a6b; }
.g { fill: #22a020; }
.ln { fill: none; stroke: #071a6b; }
.sh { fill: #8c8c8c; }

/* title and menus */
.titlebar {
    display: flex;
    align-items: center;
    flex: none;
    height: 19px;
    padding: 0 2px;
    background: linear-gradient(#98b0cc, #9ab6d4 50%, #b5cde8);
}
.app-icon {
    width: 16px;
    height: 16px;
}
h1 {
    flex: 1;
    margin: 0 0 0 8px;
    font: 11px/18px "Open Sans", sans-serif;
}
.win-buttons {
    display: flex;
    gap: 2px;
}
.win-buttons button {
    width: 28px;
    height: 15px;
    border: 1px solid #506c90;
    border-radius: 2px;
    box-shadow: inset 0 0 0 1px #cfe0f2;
    background: linear-gradient(#c4d6ea 50%, #9cb8d6 50%);
}
.win-buttons .close {
    border-color: #501010;
    box-shadow: inset 0 0 0 1px #e8a898;
    background: linear-gradient(#dd9080 45%, #b83018 50%, #d06040);
}
.win-buttons svg {
    width: 14px;
    height: 12px;
}
.menubar {
    display: flex;
    flex: none;
    gap: 15px;
    height: 19px;
    padding: 0 7px;
    border-bottom: 1px solid #a0a0a0;
    background: linear-gradient(#fff, #eef0f8 40%, #d6dcee 45%, #e4e7f6);
    font: 11px/19px "Open Sans", sans-serif;
}

/* dotted drag handles */
.grip {
    flex: none;
    width: 10px;
    align-self: stretch;
    background:
        linear-gradient(#444, #444) 2px 2px / 5px 1px no-repeat,
        linear-gradient(#444, #444) 3px 3px / 3px 1px no-repeat,
        linear-gradient(#efefef, #efefef) 0 0 / 10px 6px no-repeat,
        conic-gradient(from 270deg at 1px 1px, #666 90deg, transparent 0) 3px 0 / 3px 3px repeat-y,
        conic-gradient(from 270deg at 1px 1px, #666 90deg, transparent 0) 6px 1px / 3px 3px repeat-y;
}
.hgrip {
    display: flex;
    align-items: center;
    gap: 2px;
    flex: none;
    height: 8px;
    margin: 0 0 1px 2px;
}
.hgrip::before {
    content: "";
    border: 3px solid transparent;
    border-left: 4px solid #444;
    border-right: 0;
}
.hgrip::after {
    content: "";
    flex: 1;
    height: 4px;
    background: conic-gradient(from 270deg at 1px 1px, #666 90deg, transparent 0) 0 0 / 3px 3px;
}

/* status line */
.statusline {
    display: flex;
    align-items: center;
    flex: none;
    height: 32px;
    border-top: 1px solid #fff;
}
.statusline .grip {
    width: 12px;
}
.statusline button {
    width: 26px;
    height: 26px;
}
.statusline button.wide {
    width: 28px;
}
.statusline button svg {
    width: 20px;
    height: 20px;
}
.statusline .on, .channel-bar .on {
    border: 1px solid #fff;
    border-top-color: #a0a0a0;
    border-left-color: #a0a0a0;
}
.statusline .ipr text {
    font: bold 7px "Liberation Sans", sans-serif;
    fill: #fff;
}
.menuset {
    appearance: none;
    width: 90px;
    height: 22px;
    padding: 0 4px;
    border: 2px solid #fff;
    border-top-color: #888;
    border-left-color: #888;
    border-radius: 0;
    background:
        linear-gradient(#000, #000) 74px 7px / 7px 1px no-repeat,
        linear-gradient(#000, #000) 75px 8px / 5px 1px no-repeat,
        linear-gradient(#000, #000) 76px 9px / 3px 1px no-repeat,
        linear-gradient(#000, #000) 77px 10px / 1px 1px no-repeat,
        linear-gradient(#efefef, #efefef) 70px 0 / 15px 17px no-repeat,
        linear-gradient(#888, #888) 70px 0 / 16px 18px no-repeat,
        #fff;
}
.sep {
    flex: none;
    width: 12px;
    height: 26px;
    background:
        linear-gradient(#444, #444) 5px 9px / 3px 9px no-repeat,
        linear-gradient(#777, #777) 6px 0 / 1px 26px no-repeat;
}
.collapse {
    width: 12px;
    height: 26px;
}
.popup {
    width: 22px;
    height: 26px;
}
.statusline .axis {
    margin: 0 8px 0 6px;
}
.statusline .axis svg {
    width: 26px;
    height: 18px;
}
.statusline label {
    display: flex;
    align-items: center;
    gap: 5px;
    margin-right: 5px;
}
.statusline label input {
    width: 37px;
    height: 24px;
}
input[type=text] {
    padding: 0 1px;
    border: 2px solid #fff;
    border-top-color: #777;
    border-left-color: #777;
    background: #fff;
    border-radius: 0;
}
.right {
    display: flex;
    margin-left: auto;
}

/* shelf */
.shelf-area {
    display: flex;
    flex: none;
    height: 65px;
}
.shelf-menu {
    display: flex;
    flex-direction: column;
    justify-content: flex-end;
    width: 27px;
    padding: 0 2px 1px;
}
.shelf-menu button {
    width: 22px;
    height: 20px;
    border: 1px solid #888;
    border-color: #fff #888 #888 #fff;
}
.shelf-menu svg {
    width: 22px;
    height: 18px;
}
.shelf-main {
    flex: 1;
    min-width: 0;
    display: flex;
    flex-direction: column;
}
.tabs {
    display: flex;
    align-items: flex-end;
    height: 20px;
    padding-left: 1px;
}
.tabs a {
    min-width: 42px;
    height: 17px;
    padding: 0 3px 0 4px;
    border-top: 1px solid #fff;
    border-left: 1px solid #fff;
    border-right: 2px solid #777;
    line-height: 17px;
}
.tabs a.active {
    height: 20px;
    padding: 0 5px 0 7px;
}
.trash {
    margin: 0 4px 2px auto;
}
.trash svg {
    width: 14px;
    height: 16px;
}
.shelf {
    display: flex;
    align-items: center;
    gap: 2px;
    flex: 1;
    margin-bottom: 3px;
    padding-left: 3px;
    border: 3px double #707070;
    box-shadow: inset 0 1px #707070;
}
.shelf button {
    width: 32px;
    height: 32px;
    background: #c0c0c0;
}
.shelf button svg {
    width: 32px;
    height: 32px;
}
.updown {
    display: flex;
    flex-direction: column;
    justify-content: space-between;
    align-self: stretch;
    align-items: center;
    width: 17px;
    margin-left: auto;
    padding: 7px 0;
    border-left: 1px solid #fff;
}
.up, .down {
    border: 3px solid transparent;
    border-top: 0;
    border-bottom: 4px solid #888;
}
.down {
    transform: rotate(180deg);
}

/* workspace */
.workspace {
    display: flex;
    flex: 1;
    min-height: 0;
}
.toolbox {
    display: flex;
    flex-direction: column;
    flex: none;
    width: 38px;
}
.tools, .layouts {
    display: flex;
    flex-direction: column;
    gap: 2px;
    margin-right: 2px;
    padding: 1px 0 0 3px;
    border-top: 2px solid #aaa;
}
.tools button, .slot {
    width: 32px;
    height: 32px;
    background: #c0c0c0;
}
.tools .slot {
    background: none;
}
.tools .active {
    outline: 2px solid #000080;
    outline-offset: -1px;
}
.tools svg, .layouts svg {
    width: 32px;
    height: 32px;
}
.layouts {
    margin-top: 7px;
}
.layouts button {
    width: 32px;
    height: 32px;
    border: 1px solid #333;
    background: linear-gradient(135deg, #e0e0dc, #b8b8b4);
}
.layouts svg {
    margin: -1px;
}
.layouts .more {
    border: 1px solid #fff;
    border-right: 2px solid #aaa;
    border-bottom: 2px solid #aaa;
    background: #efefef;
}
.logo {
    width: 32px;
    height: 32px;
    margin: auto 0 3px 3px;
}
.panel {
    display: flex;
    flex-direction: column;
    flex: 1;
    min-width: 0;
    border: solid #98b4d4;
    border-width: 3px 2px 2px 3px;
    border-right-color: #808080;
}
.panel-menu {
    display: flex;
    gap: 11px;
    height: 19px;
    flex: none;
    padding-left: 5px;
    border-bottom: 1px solid #777;
    font: 11px/19px "Open Sans", sans-serif;
}
.panel-bar {
    display: flex;
    align-items: center;
    gap: 2px;
    flex: none;
    height: 22px;
    padding-left: 2px;
}
.panel-bar button {
    width: 19px;
    height: 19px;
    background: #b8b8b8;
}
.panel-bar svg {
    width: 19px;
    height: 19px;
}
.panel-bar .lit { background: #fac878; }
.panel-bar .dk { background: #888; }
.panel-bar .tan { background: #b8a080; }
.panel-bar .blk { background: #000; }
.psep {
    width: 9px;
    height: 19px;
    background:
        linear-gradient(#000, #000) 3px 6px / 3px 7px no-repeat,
        linear-gradient(#000, #000) 4px 0 / 1px 19px no-repeat;
}
.viewport {
    position: relative;
    flex: 1;
    min-height: 0;
    background: #a0a0a0;
    border-right: 1px solid #fff;
    border-bottom: 1px solid #fff;
}
#grid {
    width: 100%;
    height: 100%;
}
.grid-lines {
    stroke: #808080;
    shape-rendering: crispEdges;
}
.grid-axes {
    stroke: #000;
    stroke-width: 2px;
    shape-rendering: crispEdges;
}
.cam {
    font: bold 12px "Liberation Sans", sans-serif;
    fill: #004020;
}
.gizmo {
    position: absolute;
    left: 9px;
    bottom: 17px;
    width: 34px;
    height: 40px;
    font: bold 11px "DejaVu Sans", sans-serif;
}

/* channel box */
.channel {
    display: flex;
    flex-direction: column;
    flex: none;
    width: 232px;
    padding: 0 1px 0 3px;
}
.channel-bar {
    display: flex;
    align-items: center;
    height: 24px;
}
.channel-bar button {
    width: 22px;
    height: 22px;
    margin-right: 1px;
}
.channel-bar svg {
    width: 16px;
    height: 16px;
}
.raised, .layer-bar button, .playback button, .drop, .key, .pref {
    border: 1px solid #a0a0a0;
    border-color: #fff #a0a0a0 #a0a0a0 #fff;
}
.channel-bar .first {
    margin-left: auto;
}
.box {
    display: flex;
    flex-direction: column;
    border: 2px solid #777;
    border-right-color: #fff;
    border-bottom-color: #fff;
}
.box nav {
    display: flex;
    gap: 11px;
    padding: 0 4px;
    font: 11px/19px "Open Sans", sans-serif;
    border-bottom: 1px solid #777;
}
.channels {
    flex: 1;
}
.well {
    flex: 1;
    margin: 1px;
    border: 1px solid #a0a0a0;
}
.layers {
    margin-top: 5px;
}
.radios {
    display: grid;
    grid-template-columns: 65px 65px 65px;
    height: 24px;
    align-items: center;
    padding-left: 3px;
}
.radios label {
    display: flex;
    align-items: center;
    gap: 6px;
}
.radios input {
    appearance: none;
    width: 11px;
    height: 11px;
    margin: 0;
    border: 1px solid #888;
    border-color: #777 #ddd #ddd #777;
    border-radius: 50%;
    background: #fff;
}
.radios input:checked {
    background: radial-gradient(#000 2px, #fff 3px);
}
.layer-bar {
    display: flex;
    justify-content: flex-end;
    gap: 1px;
    height: 29px;
    padding: 1px 1px 0 0;
    border-bottom: 1px solid #777;
}
.layer-bar button {
    width: 26px;
    height: 26px;
}
.layer-bar .gap {
    margin-left: 3px;
}
.layer-bar svg {
    width: 20px;
    height: 20px;
}
.list {
    display: flex;
    height: 144px;
    border: 2px solid #777;
    border-color: #777 #999 #bbb #777;
}
.pager {
    display: grid;
    grid-template-columns: 1fr 1fr;
    gap: 2px;
    margin: 2px 0 1px;
}
.pager button {
    height: 14px;
    border-right: 2px solid #777;
    border-bottom: 2px solid #777;
    border-top: 1px solid #fff;
}

/* bottom rows */
.row {
    display: flex;
    flex: none;
    align-items: center;
}
.time-row {
    height: 33px;
}
.timeline {
    display: flex;
    flex: 1;
    min-width: 0;
    height: 32px;
    padding: 0 9px 0 6px;
    border: 2px solid #fff;
    border-top-color: #a0a0a0;
    border-left-color: #a0a0a0;
    font: bold 12px/12px "Liberation Sans", sans-serif;
}
.frame {
    flex: 1;
    padding-left: 11px;
    background: linear-gradient(#000, #000) 0 100% / 2px 12px no-repeat;
}
.frame.now {
    background: linear-gradient(#efefef, #efefef) 0 100% / 2px 12px no-repeat, #0e0e0e;
    color: #fff;
}
.frame span {
    display: block;
}
.current {
    width: 67px;
    height: 20px;
    margin: 0 4px;
}
.playback {
    display: flex;
    gap: 2px;
    margin-right: 2px;
}
.playback button {
    width: 26px;
    height: 26px;
}
.playback svg {
    width: 22px;
    height: 20px;
}
.range-row {
    height: 25px;
    gap: 2px;
    padding-right: 1px;
}
.range-row .grip {
    width: 8px;
}
.range-row input {
    width: 68px;
    height: 23px;
    padding-bottom: 4px;
}
.track {
    display: flex;
    flex: 1;
    min-width: 0;
    height: 23px;
    padding: 1px 0 1px 5px;
    border: 2px solid #fff;
    border-top-color: #999;
    border-left-color: #999;
    background: #b2b2b2;
}
.range {
    display: flex;
    align-items: center;
    gap: 5px;
    width: 50%;
    padding: 0 4px;
    border: 1px solid #fff;
    border-right-color: #888;
    border-bottom-color: #888;
    background: #efefef;
    color: #fff;
}
.range i {
    width: 11px;
    height: 12px;
    border: 1px solid #fff;
    border-right-color: #888;
    border-bottom-color: #888;
}
.range .end {
    margin-left: auto;
}
.range-row .named {
    width: 98px;
    background: #efefef;
}
.drop {
    width: 24px;
    height: 24px;
}
.drop svg {
    width: 16px;
    height: 10px;
}
.key {
    width: 28px;
    height: 24px;
}
.key svg {
    width: 22px;
    height: 10px;
}
.pref {
    width: 20px;
    height: 22px;
}
.pref svg {
    width: 16px;
    height: 16px;
}
.cmd-row {
    height: 25px;
    padding-right: 1px;
    gap: 1px;
}
.cmd-row label {
    width: 48px;
    padding-left: 11px;
    font: bold 11px/16px "DejaVu Sans", sans-serif;
}
.cmd-row input {
    flex: 802;
    height: 23px;
}
.cmd-row output {
    flex: 794;
    height: 23px;
    margin-left: 3px;
    border: 2px solid #fff;
    border-top-color: #777;
    border-left-color: #777;
    background: #929ca9;
}
.help-row {
    height: 23px;
    padding-bottom: 1px;
    border-bottom: 1px solid #555;
}
.help-row p {
    flex: 1;
    height: 21px;
    margin: 0;
    padding-left: 14px;
    border-top: 2px solid #a0a0a0;
    border-left: 1px solid #a0a0a0;
    line-height: 18px;
}
```
FILE: app.js
```js
// Perspective ground grid, 24 x 24 cells
const CELLS = 24;
const centre = { x: 702, y: 379.5 };

function project(u, v) {
    const w = 1 - 0.167 * (u + v);
    return [centre.x + 258.5 * (u - v) / w, centre.y + 121 * (u + v) / w];
}

function addLine(group, a, b) {
    const line = document.createElementNS('http://www.w3.org/2000/svg', 'line');
    line.setAttribute('x1', a[0]);
    line.setAttribute('y1', a[1]);
    line.setAttribute('x2', b[0]);
    line.setAttribute('y2', b[1]);
    group.appendChild(line);
}

const lines = document.querySelector('.grid-lines');
const axes = document.querySelector('.grid-axes');
for (let i = 0; i <= CELLS; i++) {
    const t = i * 2 / CELLS - 1;
    const group = i === CELLS / 2 ? axes : lines;
    addLine(group, project(t, -1), project(t, 1));
    addLine(group, project(-1, t), project(1, t));
}

// Frames of the time slider
const timeline = document.getElementById('timeline');
for (let f = 1; f <= 24; f++) {
    const frame = document.createElement('div');
    frame.className = f === 1 ? 'frame now' : 'frame';
    frame.innerHTML = f === 1 ? '<span>1</span><span>1</span>' : '<span>' + f + '</span>';
    timeline.appendChild(frame);
}
```
